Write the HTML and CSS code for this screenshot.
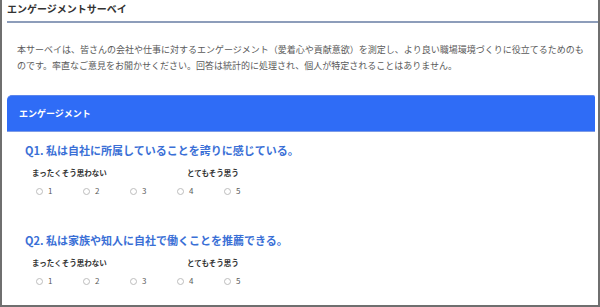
FILE: index.html
```html
<!DOCTYPE html>
<html lang="ja">
<head>
    <meta charset="UTF-8">
    <meta name="viewport" content="width=device-width, initial-scale=1.0">
    <title>エンゲージメントサーベイ</title>
    <link rel="stylesheet" href="styles.css">
</head>
<body>
    <div class="survey">
        <h1 class="survey-title">エンゲージメントサーベイ</h1>

        <p class="intro">本サーベイは、皆さんの会社や仕事に対するエンゲージメント（愛着心や貢献意欲）を測定し、より良い職場環境づくりに役立てるためのものです。率直なご意見をお聞かせください。回答は統計的に処理され、個人が特定されることはありません。</p>

        <div class="section-bar">エンゲージメント</div>

        <div class="question">
            <h2 class="question-text">Q1. 私は自社に所属していることを誇りに感じている。</h2>
            <div class="scale-labels">
                <span class="scale-low">まったくそう思わない</span>
                <span class="scale-high">とてもそう思う</span>
            </div>
            <div class="options">
                <label class="option"><input type="radio" name="q1" value="1"><span>1</span></label>
                <label class="option"><input type="radio" name="q1" value="2"><span>2</span></label>
                <label class="option"><input type="radio" name="q1" value="3"><span>3</span></label>
                <label class="option"><input type="radio" name="q1" value="4"><span>4</span></label>
                <label class="option"><input type="radio" name="q1" value="5"><span>5</span></label>
            </div>
        </div>

        <div class="question">
            <h2 class="question-text">Q2. 私は家族や知人に自社で働くことを推薦できる。</h2>
            <div class="scale-labels">
                <span class="scale-low">まったくそう思わない</span>
                <span class="scale-high">とてもそう思う</span>
            </div>
            <div class="options">
                <label class="option"><input type="radio" name="q2" value="1"><span>1</span></label>
                <label class="option"><input type="radio" name="q2" value="2"><span>2</span></label>
                <label class="option"><input type="radio" name="q2" value="3"><span>3</span></label>
                <label class="option"><input type="radio" name="q2" value="4"><span>4</span></label>
                <label class="option"><input type="radio" name="q2" value="5"><span>5</span></label>
            </div>
        </div>
    </div>
</body>
</html>
```

FILE: styles.css
```css
:root {
    --frame: #6f6f6f;
    --rule: #8d9dba;
    --bar: #2f6cf6;
    --question: #3a6fd6;
    --text: #333333;
    --text-light: #5a5a5a;
}

* {
    box-sizing: border-box;
    margin: 0;
    padding: 0;
}

body {
    font-family: "Noto Sans CJK JP", "Noto Sans", sans-serif;
    background: #ffffff;
    color: var(--text);
}

.survey {
    height: 307px;
    overflow: hidden;
    border: 2px solid var(--frame);
    border-top: none;
}

.survey-title {
    margin-left: 5px;
    font-size: 10px;
    font-weight: 700;
    line-height: 12px;
    padding: 3px 0 6px 0;
    border-bottom: 2px solid var(--rule);
    color: var(--text);
}

.intro {
    margin: 19px 14px 0 15px;
    font-size: 9px;
    line-height: 16px;
    color: var(--text-light);
}

.section-bar {
    margin: 21px 3px 0 5px;
    height: 37px;
    line-height: 35px;
    padding-left: 12px;
    background: var(--bar);
    border-top: 1px solid #5c86ec;
    border-bottom: 1px solid #7d9be6;
    border-radius: 5px 2px 0 0;
    color: #ffffff;
    font-size: 9px;
    font-weight: 700;
}

.question {
    padding-left: 23px;
    margin-top: 10px;
}

.question + .question {
    margin-top: 36px;
}

.question-text {
    font-size: 11px;
    font-weight: 700;
    line-height: 16px;
    color: var(--question);
}

.scale-labels {
    display: flex;
    margin: 10px 0 0 7px;
    font-size: 7.5px;
    font-weight: 700;
    line-height: 10px;
    color: var(--text);
}

.scale-low {
    width: 155px;
}

.options {
    display: flex;
    margin: 8px 0 0 11px;
}

.option {
    width: 47px;
    display: flex;
    align-items: center;
    gap: 5px;
    font-size: 8px;
    line-height: 10px;
    color: var(--text-light);
}

.option input {
    appearance: none;
    width: 7px;
    height: 7px;
    border: 1px solid #bdbdbd;
    border-radius: 50%;
    background: #ffffff;
}
```
